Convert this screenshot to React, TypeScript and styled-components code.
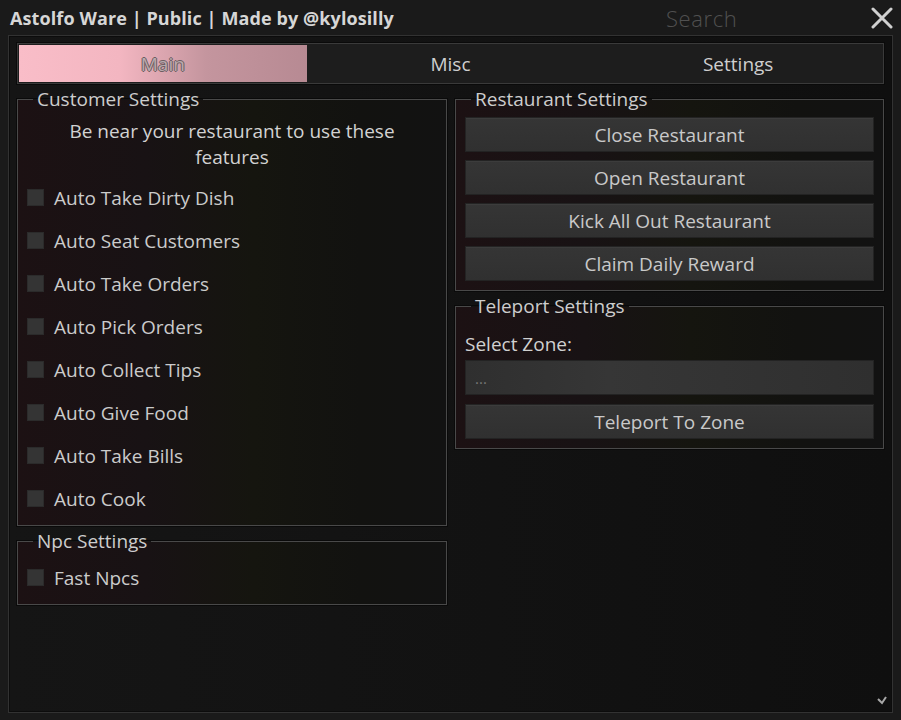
import React from 'react';
import styled, { createGlobalStyle } from 'styled-components';

const GlobalStyle = createGlobalStyle`
  html, body {
    margin: 0;
    padding: 0;
    background: #151515;
  }
  * {
    box-sizing: border-box;
  }
`;

const Window = styled.div`
  position: relative;
  width: 901px;
  height: 720px;
  background: #1a1a1a;
  font-family: 'Open Sans', 'Noto Sans', sans-serif;
  color: #cfcfcf;
  display: flex;
  flex-direction: column;
  overflow: hidden;
`;

const TitleBar = styled.div`
  height: 35px;
  display: flex;
  align-items: center;
  padding: 0 7px 0 10px;
`;

const Title = styled.div`
  font-weight: 700;
  font-size: 18px;
  letter-spacing: 0.1px;
  color: #d6d6d6;
  flex: 1;
`;

const Search = styled.div`
  width: 204px;
  font-size: 22px;
  font-weight: 300;
  letter-spacing: 0.6px;
  color: #505050;
`;

const CloseButton = styled.div`
  width: 24px;
  height: 24px;
  display: flex;
  align-items: center;
  justify-content: center;
`;

const Frame = styled.div`
  flex: 1;
  margin: 0 8px 7px 8px;
  border: 1px solid #323232;
  box-shadow: inset 0 0 0 1px #0c0c0c;
  background: linear-gradient(90deg, #151515 0%, #121212 55%, #0f0f0f 100%);
  padding: 7px 8px 0 8px;
  display: flex;
  flex-direction: column;
`;

const TabBar = styled.div`
  height: 41px;
  border: 1px solid #3a3a3a;
  box-shadow: 0 0 0 1px #0a0a0a;
  background: #1d1d1d;
  padding: 1px;
  display: flex;
`;

const Tab = styled.div<{ $active?: boolean }>`
  flex: 1;
  display: flex;
  align-items: center;
  justify-content: center;
  font-size: 19px;
  color: ${(p) => (p.$active ? '#b9a9ad' : '#cfcfcf')};
  background: ${(p) =>
    p.$active
      ? 'linear-gradient(90deg, #f9bdc8 0%, #f3b6c1 35%, #c4959e 65%, #b78a93 100%)'
      : 'transparent'};
  text-shadow: ${(p) =>
    p.$active
      ? '1px 0 0 #6d5e62, -1px 0 0 #6d5e62, 0 1px 0 #6d5e62, 0 -1px 0 #6d5e62'
      : 'none'};
`;

const Columns = styled.div`
  margin-top: 4px;
  display: grid;
  grid-template-columns: 430px 429px;
  column-gap: 8px;
  align-items: start;
`;

const Column = styled.div`
  display: flex;
  flex-direction: column;
  gap: 4px;
`;

const Group = styled.fieldset`
  margin: 0;
  min-width: 0;
  padding: 0 9px 5px 9px;
  border: 1px solid #494949;
  box-shadow: 0 0 0 1px #0a0a0a;
  background: linear-gradient(
    90deg,
    #1c1113 0%,
    #181214 30%,
    #15150f 55%,
    #121210 80%,
    #121212 100%
  );
  display: flex;
  flex-direction: column;
`;

const Legend = styled.legend`
  margin-left: 6px;
  padding: 0 4px;
  font-size: 19px;
  line-height: 22px;
  color: #cdcdcd;
`;

const Note = styled.div`
  margin: 8px auto 0 auto;
  max-width: 350px;
  text-align: center;
  font-size: 19px;
  line-height: 26px;
  color: #d2d2d2;
`;

const ToggleList = styled.div<{ $top: number }>`
  margin-top: ${(p) => p.$top}px;
  display: flex;
  flex-direction: column;
`;

const ToggleRow = styled.label`
  height: 43px;
  display: flex;
  align-items: center;
  gap: 10px;
  font-size: 19px;
  color: #cbcbcb;
`;

const Box = styled.span`
  width: 17px;
  height: 17px;
  background: #343434;
  border: 1px solid #2b2b2b;
`;

const ButtonList = styled.div<{ $top: number }>`
  margin-top: ${(p) => p.$top}px;
  padding-bottom: 4px;
  display: flex;
  flex-direction: column;
  gap: 8px;
`;

const ActionButton = styled.div`
  height: 35px;
  display: flex;
  align-items: center;
  justify-content: center;
  font-size: 19px;
  color: #c9c9c9;
  background: linear-gradient(180deg, #353535 0%, #303030 100%);
  border: 1px solid #232323;
  box-shadow: inset 0 1px 0 #3c3c3c;
`;

const FieldLabel = styled.div`
  margin-top: 14px;
  line-height: 26px;
  font-size: 19px;
  color: #d0d0d0;
`;

const Input = styled.div`
  margin-top: 3px;
  height: 35px;
  display: flex;
  align-items: center;
  padding: 0 9px;
  font-size: 15px;
  color: #777;
  background: linear-gradient(90deg, #2f2f2f 0%, #363636 35%, #2f2f2f 100%);
  border: 1px solid #232323;
`;

const Grip = styled.div`
  position: absolute;
  right: 14px;
  bottom: 15px;
  width: 11px;
  height: 11px;
  line-height: 0;
`;

const customerToggles = [
  'Auto Take Dirty Dish',
  'Auto Seat Customers',
  'Auto Take Orders',
  'Auto Pick Orders',
  'Auto Collect Tips',
  'Auto Give Food',
  'Auto Take Bills',
  'Auto Cook',
];

const restaurantActions = [
  'Close Restaurant',
  'Open Restaurant',
  'Kick All Out Restaurant',
  'Claim Daily Reward',
];

function Toggle({ label }: { label: string }) {
  return (
    <ToggleRow>
      <Box />
      {label}
    </ToggleRow>
  );
}

export default function App() {
  return (
    <>
      <GlobalStyle />
      <Window>
        <TitleBar>
          <Title>Astolfo Ware | Public | Made by @kylosilly</Title>
          <Search>Search</Search>
          <CloseButton>
            <svg width="22" height="22" viewBox="0 0 22 22">
              <path
                d="M2 2 L20 20 M20 2 L2 20"
                stroke="#d0d0d0"
                strokeWidth="3"
                strokeLinecap="round"
              />
            </svg>
          </CloseButton>
        </TitleBar>
        <Frame>
          <TabBar>
            <Tab $active>Main</Tab>
            <Tab>Misc</Tab>
            <Tab>Settings</Tab>
          </TabBar>
          <Columns>
            <Column>
              <Group>
                <Legend>Customer Settings</Legend>
                <Note>Be near your restaurant to use these features</Note>
                <ToggleList $top={6}>
                  {customerToggles.map((t) => (
                    <Toggle key={t} label={t} />
                  ))}
                </ToggleList>
              </Group>
              <Group>
                <Legend>Npc Settings</Legend>
                <ToggleList $top={4}>
                  <Toggle label="Fast Npcs" />
                </ToggleList>
              </Group>
            </Column>
            <Column>
              <Group>
                <Legend>Restaurant Settings</Legend>
                <ButtonList $top={7}>
                  {restaurantActions.map((a) => (
                    <ActionButton key={a}>{a}</ActionButton>
                  ))}
                </ButtonList>
              </Group>
              <Group>
                <Legend>Teleport Settings</Legend>
                <FieldLabel>Select Zone:</FieldLabel>
                <Input>...</Input>
                <ButtonList $top={9}>
                  <ActionButton>Teleport To Zone</ActionButton>
                </ButtonList>
              </Group>
            </Column>
          </Columns>
        </Frame>
        <Grip>
          <svg width="11" height="11" viewBox="0 0 11 11">
            <path d="M2 5 L6 9 L10 3" stroke="#a8a8a8" strokeWidth="2" fill="none" />
          </svg>
        </Grip>
      </Window>
    </>
  );
}
